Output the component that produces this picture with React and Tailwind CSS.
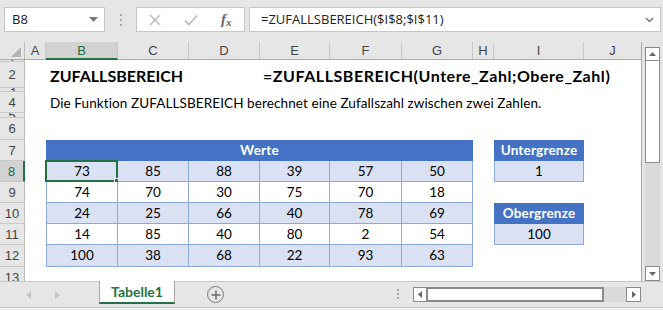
import React from "react";

const colW = {
  A: "w-[21px]", B: "w-[72px]", C: "w-[71px]", D: "w-[71px]", E: "w-[70px]",
  F: "w-[72px]", G: "w-[71px]", H: "w-[21px]", I: "w-[90px]", J: "w-[58px]",
};
const letters = ["A", "B", "C", "D", "E", "F", "G", "H", "I", "J"];

const data = [
  [73, 85, 88, 39, 57, 50],
  [74, 70, 30, 75, 70, 18],
  [24, 25, 66, 40, 78, 69],
  [14, 85, 40, 80, 2, 54],
  [100, 38, 68, 22, 93, 63],
];

function RowHead({ n, sel }) {
  return (
    <div
      className={
        "w-[25px] shrink-0 border-b border-[#c8c8c8] flex items-center justify-center text-[13px] overflow-hidden leading-none " +
        (sel
          ? "bg-[#d2d2d2] text-[#1e6b41] border-r-2 border-r-[#217346]"
          : "bg-[#e6e6e6] text-[#444] border-r border-r-[#bdbdbd]")
      }
      style={{ fontFamily: "'Liberation Sans', Arial, sans-serif" }}
    >
      {n}
    </div>
  );
}

function Empty({ c }) {
  return <div className={colW[c] + " shrink-0"} />;
}

function DataCell({ c, v, light, first, children }) {
  return (
    <div
      className={
        colW[c] +
        " shrink-0 relative flex items-center justify-center border-r border-b border-[#8ea9db] text-[13.5px] text-black " +
        (light ? "bg-[#d9e1f2] " : "bg-white ") +
        (first ? "border-l" : "")
      }
    >
      {v}
      {children}
    </div>
  );
}

function HeadCell({ w, label }) {
  return (
    <div
      className={
        w +
        " shrink-0 flex items-center justify-center bg-[#4472c4] border border-[#4472c4] text-white font-bold text-[13.5px] tracking-[0.2px]"
      }
    >
      {label}
    </div>
  );
}

function DataRow({ row, light, extra }) {
  const cs = ["B", "C", "D", "E", "F", "G"];
  return (
    <>
      <Empty c="A" />
      {cs.map((c, i) => (
        <DataCell key={c} c={c} v={row[i]} light={light} first={i === 0}>
          {extra && i === 0 ? extra : null}
        </DataCell>
      ))}
      <Empty c="H" />
    </>
  );
}

function Selection() {
  return (
    <>
      <div className="absolute left-[-2px] top-[-1px] w-[73px] h-[22px] border-2 border-[#217346] pointer-events-none" />
      <div className="absolute left-[67px] top-[17px] w-[7px] h-[7px] bg-[#217346] border border-white" />
    </>
  );
}

export default function App() {
  return (
    <div
      className="w-[663px] h-[310px] overflow-hidden bg-[#e6e6e6] flex flex-col"
      style={{ fontFamily: "Lato, 'Open Sans', sans-serif" }}
    >
      {/* Formula bar */}
      <div className="h-[42px] shrink-0 flex items-start pt-[7px]">
        <div className="ml-[4px] w-[101px] h-[25px] bg-white border border-[#c6c6c6] flex items-center justify-between pl-[7px] pr-[6px]">
          <span
            className="text-[13px] text-[#222]"
            style={{ fontFamily: "'Open Sans', 'Noto Sans', sans-serif" }}
          >
            B8
          </span>
          <svg width="9" height="5" viewBox="0 0 9 5">
            <path d="M0 0 L9 0 L4.5 5 Z" fill="#777" />
          </svg>
        </div>
        <div className="ml-[15px] w-[2px] h-[25px] flex flex-col items-center justify-center gap-[3px]">
          <div className="w-[2px] h-[2px] bg-[#a6a6a6]" />
          <div className="w-[2px] h-[2px] bg-[#a6a6a6]" />
          <div className="w-[2px] h-[2px] bg-[#a6a6a6]" />
        </div>
        <div className="ml-[14px] w-[109px] h-[25px] bg-white border border-[#c6c6c6] flex items-center">
          <div className="w-[36px] flex justify-center">
            <svg width="12" height="12" viewBox="0 0 12 12">
              <path d="M1 1 L11 11 M11 1 L1 11" stroke="#bdbdbd" strokeWidth="1.6" />
            </svg>
          </div>
          <div className="w-[36px] flex justify-center">
            <svg width="14" height="12" viewBox="0 0 14 12">
              <path d="M1 6.5 L5 10.5 L13 1.5" stroke="#bdbdbd" strokeWidth="1.8" fill="none" />
            </svg>
          </div>
          <div
            className="w-[36px] flex justify-center items-end text-[#666] italic font-bold leading-none"
            style={{ fontFamily: "'Liberation Serif', 'Times New Roman', serif" }}
          >
            <span className="text-[15px]">f</span>
            <span className="text-[11px] mb-[-1px]">x</span>
          </div>
        </div>
        <div className="ml-[4px] w-[412px] h-[25px] bg-white border border-[#c6c6c6] flex items-center justify-between pl-[11px] pr-[6px]">
          <span
            className="text-[13px] text-[#222]"
            style={{ fontFamily: "'Open Sans', 'Noto Sans', sans-serif" }}
          >
            =ZUFALLSBEREICH($I$8;$I$11)
          </span>
          <svg width="9" height="6" viewBox="0 0 9 6">
            <path d="M1 1 L4.5 4.5 L8 1" stroke="#777" strokeWidth="1.5" fill="none" />
          </svg>
        </div>
      </div>

      {/* Main sheet area */}
      <div className="h-[239px] shrink-0 flex">
        <div className="w-[642px] h-[239px] overflow-hidden bg-white border-r border-[#a6a6a6] flex flex-col">
          {/* Column header */}
          <div
            className="h-[18px] shrink-0 flex bg-[#e6e6e6] border-b border-[#ababab]"
            style={{ fontFamily: "'Liberation Sans', Arial, sans-serif" }}
          >
            <div className="w-[25px] shrink-0 relative border-r border-[#bdbdbd]">
              <svg className="absolute right-[3px] bottom-[2px]" width="10" height="10" viewBox="0 0 10 10">
                <path d="M10 0 L10 10 L0 10 Z" fill="#b4b4b4" />
              </svg>
            </div>
            {letters.map((l) => (
              <div
                key={l}
                className={
                  colW[l] +
                  " shrink-0 flex items-center justify-center text-[13px] leading-none border-r border-[#c8c8c8] " +
                  (l === "B"
                    ? "bg-[#d2d2d2] text-[#1e6b41] border-b-2 border-b-[#217346] -mb-[1px]"
                    : "text-[#444]")
                }
              >
                {l}
              </div>
            ))}
          </div>

          {/* Row 1 */}
          <div className="h-[2px] shrink-0 flex overflow-hidden">
            <RowHead n={1} />
          </div>
          {/* Row 2 */}
          <div className="h-[26px] shrink-0 flex">
            <RowHead n={2} />
            <Empty c="A" />
            <div className="w-[214px] shrink-0 flex items-center pl-[4px] pt-[1px] text-[16px] font-bold text-black whitespace-nowrap">
              ZUFALLSBEREICH
            </div>
            <div className="w-[360px] shrink-0 flex items-center pl-[3px] pt-[1px] text-[16px] font-bold text-black whitespace-nowrap tracking-[0.55px]">
              =ZUFALLSBEREICH(Untere_Zahl;Obere_Zahl)
            </div>
          </div>
          {/* Row 3 */}
          <div className="h-[4px] shrink-0 flex overflow-hidden">
            <RowHead n={3} />
          </div>
          {/* Row 4 */}
          <div className="h-[21px] shrink-0 flex">
            <RowHead n={4} />
            <Empty c="A" />
            <div className="w-[560px] shrink-0 flex items-center pl-[4px] pt-[1px] text-[13.5px] text-black whitespace-nowrap tracking-[0.1px]">
              Die Funktion ZUFALLSBEREICH berechnet eine Zufallszahl zwischen zwei Zahlen.
            </div>
          </div>
          {/* Row 5 */}
          <div className="h-[5px] shrink-0 flex overflow-hidden">
            <RowHead n={5} />
          </div>
          {/* Row 6 */}
          <div className="h-[22px] shrink-0 flex">
            <RowHead n={6} />
          </div>
          {/* Row 7 */}
          <div className="h-[21px] shrink-0 flex">
            <RowHead n={7} />
            <Empty c="A" />
            <HeadCell w="w-[427px]" label="Werte" />
            <Empty c="H" />
            <HeadCell w="w-[90px]" label="Untergrenze" />
          </div>
          {/* Row 8 */}
          <div className="h-[21px] shrink-0 flex">
            <RowHead n={8} sel />
            <DataRow row={data[0]} light extra={<Selection />} />
            <DataCell c="I" v={1} light first />
          </div>
          {/* Row 9 */}
          <div className="h-[21px] shrink-0 flex">
            <RowHead n={9} />
            <DataRow row={data[1]} />
          </div>
          {/* Row 10 */}
          <div className="h-[21px] shrink-0 flex">
            <RowHead n={10} />
            <DataRow row={data[2]} light />
            <HeadCell w="w-[90px]" label="Obergrenze" />
          </div>
          {/* Row 11 */}
          <div className="h-[21px] shrink-0 flex">
            <RowHead n={11} />
            <DataRow row={data[3]} />
            <DataCell c="I" v={100} light first />
          </div>
          {/* Row 12 */}
          <div className="h-[22px] shrink-0 flex">
            <RowHead n={12} />
            <DataRow row={data[4]} light />
          </div>
          {/* Row 13 */}
          <div className="h-[21px] shrink-0 flex">
            <RowHead n={13} />
          </div>
        </div>

        {/* Vertical scrollbar */}
        <div className="w-[21px] shrink-0 pt-[5px] pl-[3px]">
          <div className="w-[15px] h-[234px] flex flex-col">
            <div className="h-[14px] shrink-0 bg-white border border-[#8a8a8a] flex items-center justify-center">
              <svg width="7" height="4" viewBox="0 0 7 4">
                <path d="M0 4 L7 4 L3.5 0 Z" fill="#666" />
              </svg>
            </div>
            <div className="h-[102px] shrink-0 bg-white border border-[#8a8a8a] border-t-0" />
            <div className="flex-1 bg-[#dadada]" />
            <div className="h-[15px] shrink-0 bg-white border border-[#8a8a8a] flex items-center justify-center">
              <svg width="7" height="4" viewBox="0 0 7 4">
                <path d="M0 0 L7 0 L3.5 4 Z" fill="#666" />
              </svg>
            </div>
          </div>
        </div>
      </div>

      {/* Tab bar */}
      <div className="h-[26px] shrink-0 flex items-start border-t border-[#c6c6c6] bg-[#e6e6e6]">
        <div className="w-[99px] h-[25px] shrink-0 flex items-center">
          <svg className="ml-[26px]" width="5" height="8" viewBox="0 0 5 8">
            <path d="M5 0 L5 8 L0 4 Z" fill="#c3c3c3" />
          </svg>
          <svg className="ml-[24px]" width="5" height="8" viewBox="0 0 5 8">
            <path d="M0 0 L0 8 L5 4 Z" fill="#c3c3c3" />
          </svg>
        </div>
        <div className="-mt-[1px] w-[76px] h-[23px] shrink-0 bg-white border-x border-[#a6a6a6] border-b-2 border-b-[#217346] flex items-center justify-center text-[14px] font-bold text-[#217346]">
          Tabelle1
        </div>
        <div className="ml-[32px] mt-[4px] w-[17px] h-[17px] rounded-full border border-[#7a7a7a] flex items-center justify-center">
          <svg width="10" height="10" viewBox="0 0 10 10">
            <path d="M5 0.5 L5 9.5 M0.5 5 L9.5 5" stroke="#6a6a6a" strokeWidth="1.5" />
          </svg>
        </div>
        <div className="ml-[173px] mt-[7px] w-[2px] flex flex-col gap-[2px]">
          <div className="w-[2px] h-[2px] bg-[#a6a6a6]" />
          <div className="w-[2px] h-[2px] bg-[#a6a6a6]" />
          <div className="w-[2px] h-[2px] bg-[#a6a6a6]" />
        </div>
        <div className="ml-[14px] mt-[5px] w-[228px] h-[15px] flex">
          <div className="w-[14px] h-[15px] shrink-0 bg-white border border-[#8a8a8a] flex items-center justify-center">
            <svg width="4" height="7" viewBox="0 0 4 7">
              <path d="M4 0 L4 7 L0 3.5 Z" fill="#666" />
            </svg>
          </div>
          <div className="w-[177px] h-[15px] shrink-0 bg-white border-2 border-[#8a8a8a] border-l-[1px]" />
          <div className="flex-1 bg-[#dadada]" />
          <div className="w-[15px] h-[15px] shrink-0 bg-white border border-[#8a8a8a] flex items-center justify-center">
            <svg width="4" height="7" viewBox="0 0 4 7">
              <path d="M0 0 L0 7 L4 3.5 Z" fill="#666" />
            </svg>
          </div>
        </div>
      </div>
      {/* Status strip */}
      <div className="h-[3px] shrink-0 border-t border-[#c6c6c6] bg-[#f0f0f0]" />
    </div>
  );
}
